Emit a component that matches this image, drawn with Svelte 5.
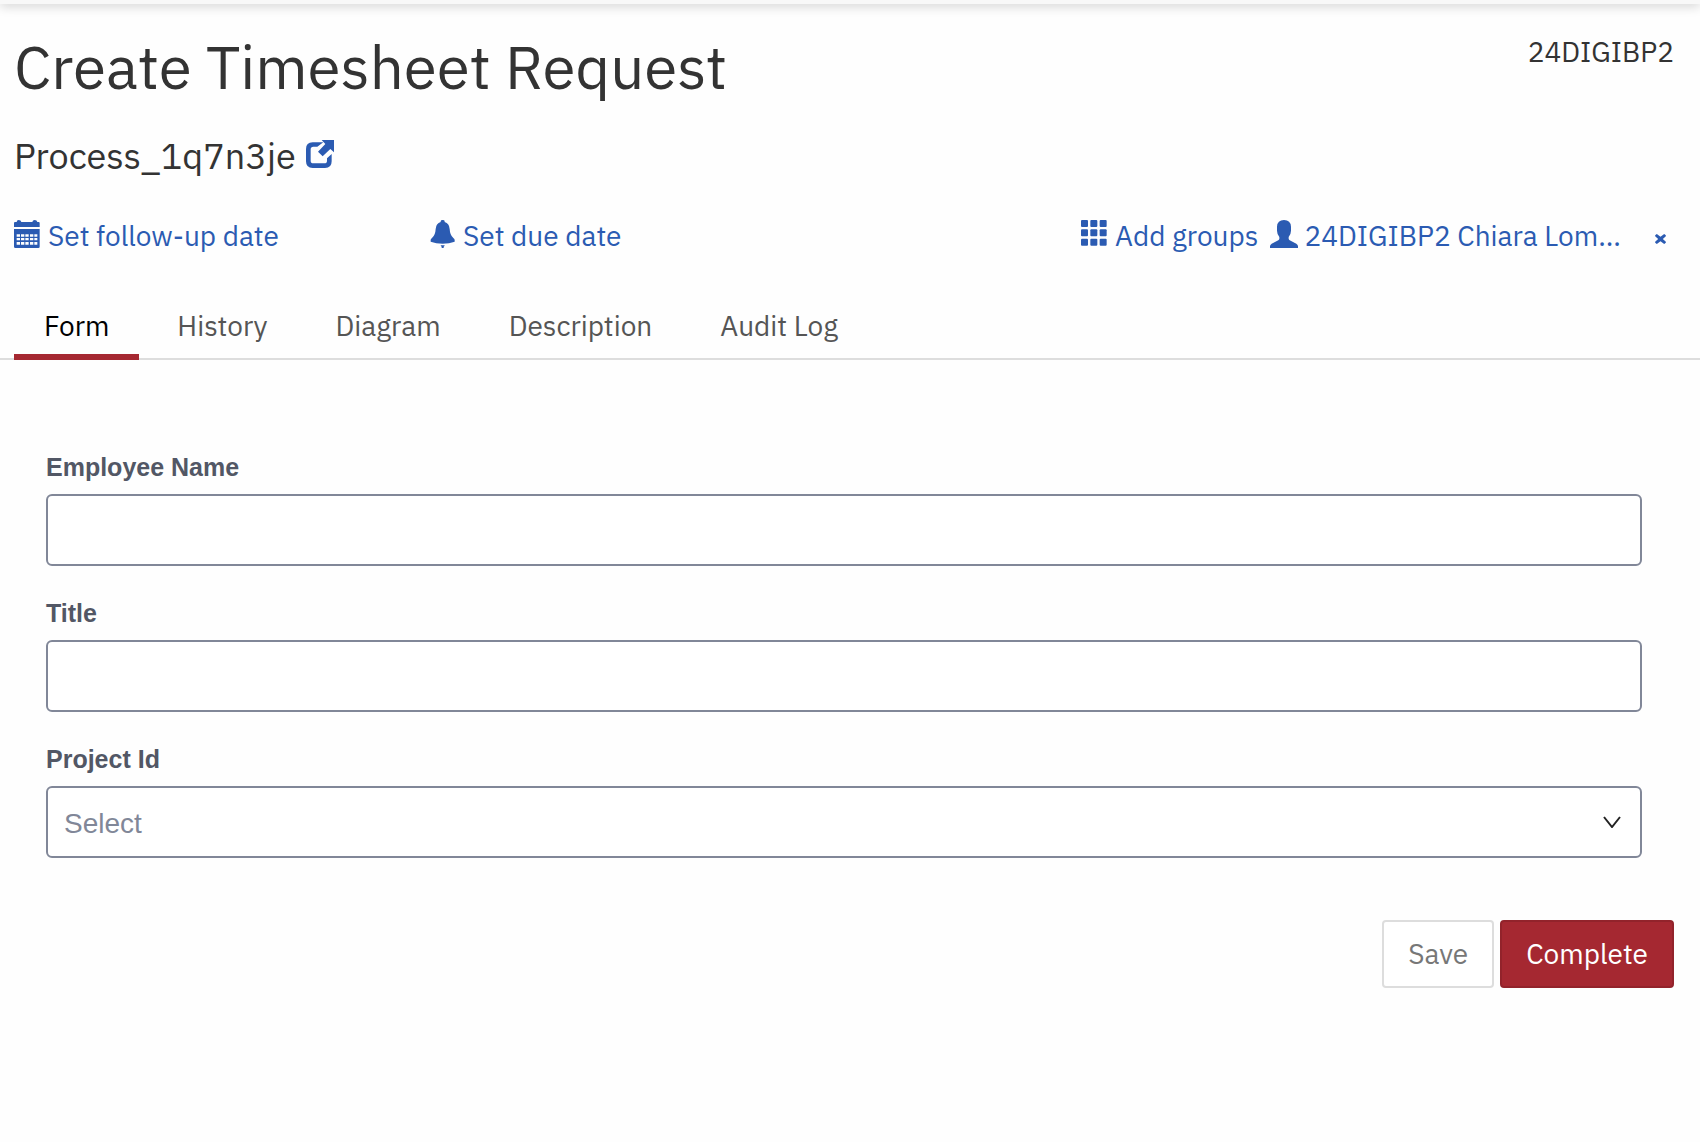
<script>
  const tabs = ['Form', 'History', 'Diagram', 'Description', 'Audit Log'];
  let active = $state('Form');
  let employee = $state('');
  let title = $state('');
  let project = $state('');
</script>

<div class="topbar"></div>
<main>
  <header>
    <div class="headings">
      <h1>Create Timesheet Request</h1>
      <h2>
        Process_1q7n3je
        <a href="#process" aria-label="Open process">
          <svg class="icon" viewBox="0 0 84 84">
            <path d="M52 7H20Q0 7 0 27V64Q0 84 20 84H57Q77 84 77 64V42L63 55V62Q63 70 55 70H22Q14 70 14 62V28Q14 20 22 20H34Z" />
            <path d="M47 0H84V37L73 27L50 49L36 35L58 12Z" />
          </svg>
        </a>
      </h2>
    </div>
    <span class="tenant">24DIGIBP2</span>
  </header>

  <div class="meta">
    <button class="link" type="button">
      <svg class="icon" viewBox="0 0 84 84">
        <path d="M0 21V9Q0 6 3 6H8Q8 0 14 0Q21 0 22 6H55Q56 0 62 0Q69 0 70 6H74Q77 6 77 9V21Z" />
        <path fill-rule="evenodd" d="M0 27H77V80Q77 84 73 84H4Q0 84 0 80ZM8 43V50H18V43ZM21 43V50H31V43ZM34 43V50H44V43ZM48 43V50H58V43ZM61 43V50H70V43ZM8 54V61H18V54ZM21 54V61H31V54ZM34 54V61H44V54ZM48 54V61H58V54ZM61 54V61H70V54ZM8 66V74H18V66ZM21 66V74H31V66ZM34 66V74H44V66ZM48 66V74H58V66ZM61 66V74H70V66Z" />
      </svg>
      Set follow-up date
    </button>
    <button class="link" type="button">
      <svg class="icon" viewBox="-5 0 84 84">
        <path d="M30 4Q30 0 36 0Q42 0 42 4V6Q56 10 57 27Q58 46 68 54Q72 57 72 60V65Q56 71 36 71Q16 71 0 65V60Q0 57 4 54Q14 46 15 27Q16 10 30 6ZM30 76H42Q42 79 39 80V84H33V80Q30 79 30 76Z" />
      </svg>
      Set due date
    </button>
    <div class="people">
      <button class="link" type="button">
        <svg class="icon" viewBox="0 0 84 84">
          {#each [0, 28, 56] as y}
            {#each [0, 28, 56] as x}
              <rect {x} {y} width="21" height="21" rx="3" />
            {/each}
          {/each}
        </svg>
        Add groups
      </button>
      <button class="link" type="button">
        <svg class="icon" viewBox="0 0 84 84">
          <path d="M42 0Q62 0 63 20V32Q63 42 56 51V57Q57 60 62 62L79 71Q84 74 84 79V84H0V79Q0 74 5 71L22 62Q27 60 28 57V51Q21 42 21 32V20Q22 0 42 0Z" />
        </svg>
        24DIGIBP2 Chiara Lom...
      </button>
      <button class="link remove" type="button" aria-label="Remove assignee">
        <svg viewBox="0 0 32 30">
          <path d="M0 4L5 0L16 8L27 0L32 4V7L23 15L32 23V26L27 30L16 22L5 30L0 26V23L9 15L0 7Z" />
        </svg>
      </button>
    </div>
  </div>

  <nav>
    {#each tabs as tab}
      <button type="button" class:active={active === tab} onclick={() => (active = tab)}>{tab}</button>
    {/each}
  </nav>

  <form>
    <div class="fields">
      <label for="employee">Employee Name</label>
      <input id="employee" type="text" bind:value={employee} />
      <label for="title">Title</label>
      <input id="title" type="text" bind:value={title} />
      <label for="project">Project Id</label>
      <div class="select">
        <select id="project" bind:value={project}>
          <option value="">Select</option>
        </select>
        <svg viewBox="0 0 18 12"><path d="M1 1L9 11L17 1" /></svg>
      </div>
    </div>
    <div class="actions">
      <button class="save" type="button">Save</button>
      <button class="complete" type="button">Complete</button>
    </div>
  </form>
</main>

<style>
  :global(body) {
    margin: 0;
    background: #fefefe;
  }
  .topbar {
    height: 4px;
    background: #f8f8f8;
    box-shadow: 0 0 12px rgba(0, 0, 0, 0.4);
  }
  main {
    color: #333;
    font-family: 'IBM Plex Sans', Roboto, sans-serif;
    font-size: 28px;
    line-height: 40px;
  }
  button {
    font: inherit;
    cursor: pointer;
  }
  header {
    display: flex;
    justify-content: space-between;
    padding: 28px 26px 0 14px;
  }
  h1,
  h2 {
    margin: 0;
    font-weight: 400;
  }
  h1 {
    font-size: 60px;
    line-height: 70px;
  }
  h2 {
    display: flex;
    align-items: center;
    gap: 10px;
    margin-top: 32px;
    font-size: 36px;
    line-height: 44px;
  }
  h2 a {
    display: flex;
  }
  .icon {
    width: 28px;
    height: 28px;
    margin-bottom: 4px;
    fill: #2b5bb2;
  }
  .meta {
    display: grid;
    grid-template-columns: 415px auto 1fr;
    margin-top: 38px;
    padding: 0 34px 0 14px;
  }
  .link {
    display: flex;
    align-items: center;
    gap: 6px;
    padding: 0;
    border: 0;
    background: none;
    color: #2b5bb2;
  }
  .people {
    display: flex;
    justify-content: flex-end;
    gap: 12px;
  }
  .remove {
    margin-left: 22px;
    padding-top: 6px;
  }
  .remove svg {
    width: 11px;
    height: 10px;
    fill: #2b5bb2;
  }
  nav {
    display: flex;
    gap: 8px;
    margin-top: 44px;
    padding-left: 14px;
    box-shadow: inset 0 -2px #ddd;
  }
  nav button {
    padding: 6px 30px 8px;
    border: 0;
    border-bottom: 6px solid transparent;
    background: none;
    color: #555;
  }
  nav button.active {
    border-color: #a52831;
    color: #000;
  }
  form {
    padding: 92px 26px 0 46px;
  }
  .fields {
    display: flex;
    flex-direction: column;
    padding-right: 32px;
    font-family: 'Liberation Sans', Arial, sans-serif;
  }
  label {
    margin-bottom: 12px;
    color: #525765;
    font-size: 25px;
    font-weight: 700;
    line-height: 30px;
  }
  input,
  select {
    box-sizing: border-box;
    width: 100%;
    height: 72px;
    padding: 0 16px;
    border: 2px solid #818798;
    border-radius: 6px;
    background: #fff;
    color: #818798;
    font: inherit;
  }
  input {
    margin-bottom: 32px;
  }
  select {
    padding-top: 4px;
    appearance: none;
  }
  .select {
    display: grid;
    align-items: center;
  }
  .select > * {
    grid-area: 1 / 1;
  }
  .select svg {
    justify-self: end;
    width: 18px;
    height: 12px;
    margin-right: 21px;
    fill: none;
    stroke: #222;
    stroke-width: 2;
    pointer-events: none;
  }
  .actions {
    display: flex;
    justify-content: flex-end;
    gap: 6px;
    margin-top: 62px;
  }
  .actions button {
    padding: 12px 24px;
    border: 2px solid #ddd;
    border-radius: 4px;
    background: #fff;
    color: #777;
  }
  .actions .complete {
    border-color: #92232b;
    background: #a52831;
    color: #fff;
  }
</style>
